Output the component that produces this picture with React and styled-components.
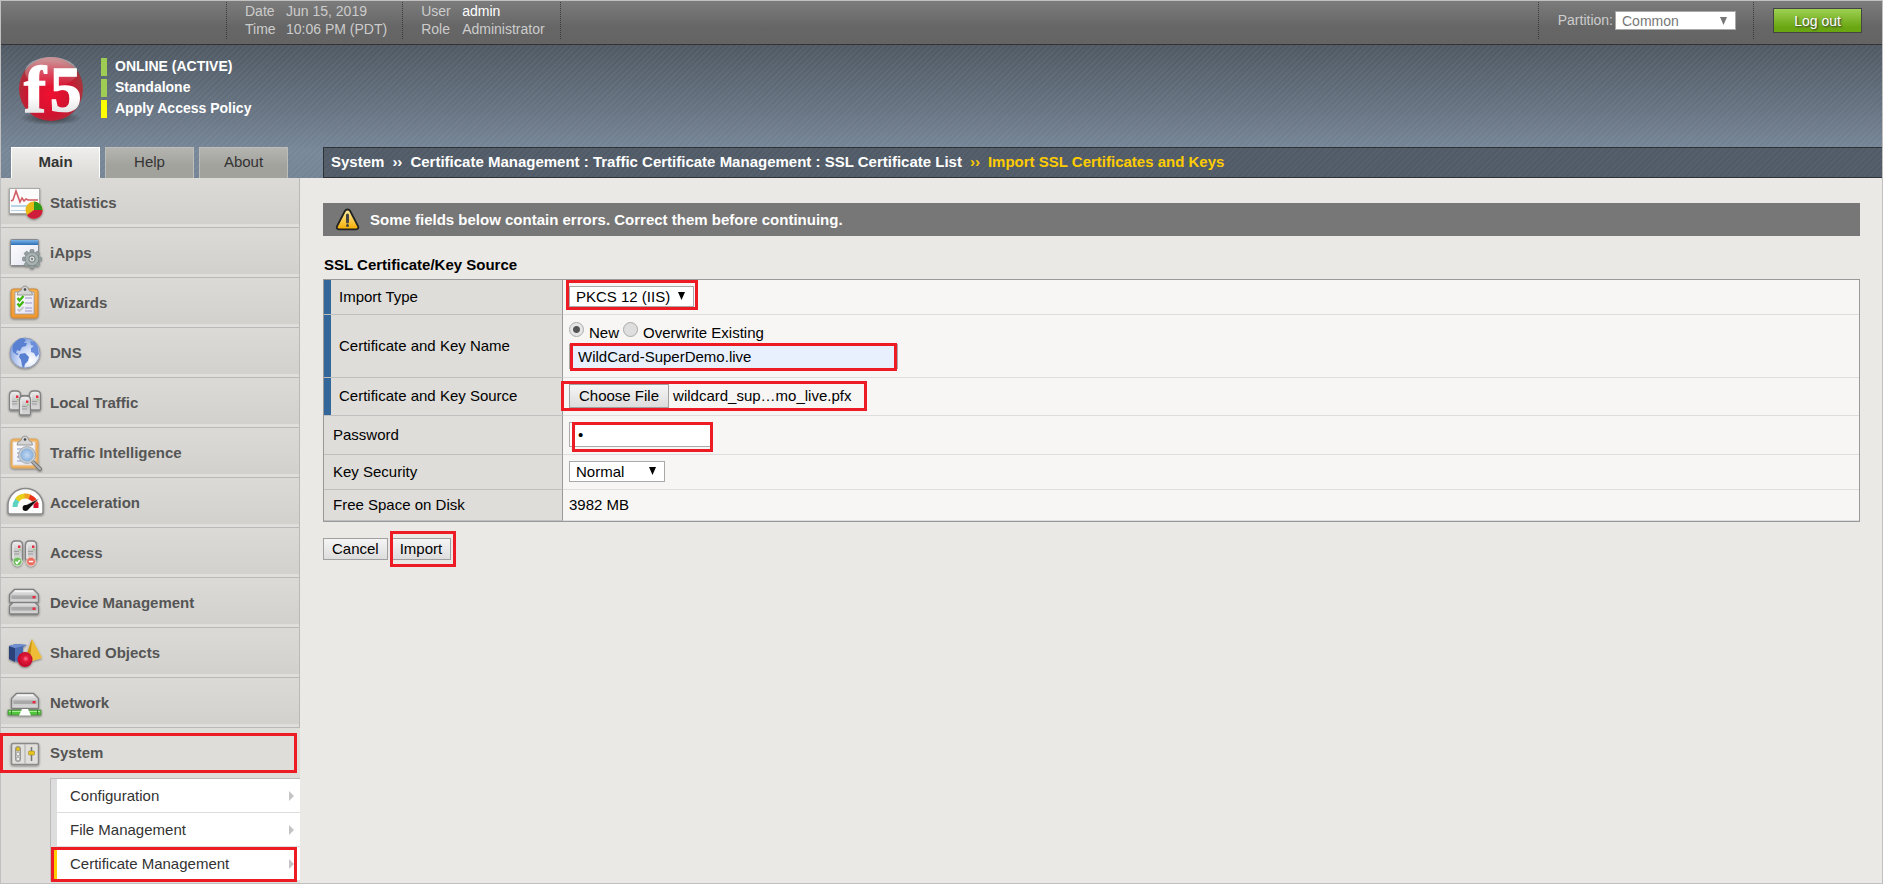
import React from 'react';
import styled, { createGlobalStyle } from 'styled-components';

const GlobalStyle = createGlobalStyle`
  *, *::before, *::after { box-sizing: border-box; }
  body {
    margin: 0;
    background: #eae9e5;
    color: #000;
    font-family: "Liberation Sans", Arial, sans-serif;
    font-size: 15px;
  }
  button, input, select { font-family: inherit; margin: 0; }
`;

const Page = styled.div`
  display: flex;
  flex-direction: column;
  min-height: 100vh;
  border: 1px solid #c0c0c0;
`;

const TopBar = styled.header`
  display: flex;
  height: 44px;
  padding-top: 1px;
  border-bottom: 1px solid #333;
  background: linear-gradient(#7c7c7c, #666 60%, #646464);
  color: #ccc;
  font-size: 14px;
  line-height: 18px;
`;

const DeviceSlot = styled.div`
  width: 225px;
`;

const Facts = styled.dl`
  display: grid;
  grid-template-columns: ${(p) => p.$label}px auto;
  align-content: start;
  height: 37px;
  margin: 0;
  padding: 0 15px 0 18px;
  border-left: 1px dotted #3a3a3a;
`;

const FactLabel = styled.dt``;

const FactValue = styled.dd`
  margin: 0;
  color: ${(p) => (p.$strong ? '#fff' : 'inherit')};
`;

const TopSpacer = styled.div`
  flex: 1;
  height: 37px;
  border-left: 1px dotted #3a3a3a;
`;

const TopGroup = styled.div`
  display: flex;
  align-items: flex-start;
  gap: 2px;
  height: 37px;
  padding: ${(p) => p.$top}px ${(p) => p.$right}px 0 19px;
  border-left: 1px dotted #3a3a3a;
`;

const PartitionLabel = styled.label``;

const SelectWrap = styled.span`
  position: relative;
  display: inline-flex;
`;

const SelectArrow = styled.svg`
  position: absolute;
  top: 50%;
  right: 9px;
  margin-top: -4px;
  pointer-events: none;
`;

const Select = styled.select`
  appearance: none;
  width: ${(p) => p.$width}px;
  height: ${(p) => p.$height || 21}px;
  padding: 0 6px;
  border: 1px solid #a9a9a9;
  border-radius: 0;
  background: #fff;
  color: ${(p) => p.$color || '#000'};
  font-size: ${(p) => p.$size || 15}px;
`;

const LogoutButton = styled.button`
  width: 89px;
  height: 25px;
  padding: 0;
  border: 1px solid #444;
  background: linear-gradient(#9ed052, #6aa612 80%);
  color: #fff;
  font-size: 14px;
  text-shadow: 1px 1px 2px #333;
`;

const Banner = styled.div`
  display: flex;
  flex-direction: column;
  justify-content: space-between;
  height: 133px;
  background:
    repeating-linear-gradient(135deg, rgba(255, 255, 255, 0.04) 0 2px, transparent 2px 4px),
    linear-gradient(#4f5963, #6a7786 55%, #778798 80%, #748495);
`;

const Brand = styled.div`
  display: flex;
  gap: 10px;
  padding: 10px 0 0 15px;
`;

const StatusList = styled.ul`
  display: flex;
  flex-direction: column;
  gap: 3px;
  margin: 0;
  padding: 3px 0 0;
  list-style: none;
`;

const Status = styled.li`
  height: 18px;
  padding-left: 8px;
  border-left: 6px solid ${(p) => p.$color};
  color: #fff;
  font-size: 14px;
  font-weight: bold;
  line-height: 17px;
`;

const NavBar = styled.div`
  display: flex;
  height: 31px;
`;

const Tabs = styled.nav`
  display: flex;
  flex: none;
  gap: 5px;
  width: 322px;
  padding-left: 10px;
`;

const Tab = styled.a`
  width: 89px;
  border: 1px solid ${(p) => (p.$active ? '#fff' : '#bcbcb8')};
  border-bottom: 0;
  background: ${(p) => (p.$active ? 'linear-gradient(#efeeec, #dbdad6)' : 'linear-gradient(#b4b4b0, #a2a29d 60%)')};
  color: #333;
  font-weight: ${(p) => (p.$active ? 'bold' : 'normal')};
  line-height: 28px;
  text-align: center;
  text-decoration: none;
`;

const Breadcrumb = styled.nav`
  display: flex;
  flex: 1;
  gap: 8px;
  padding-left: 7px;
  border: 1px solid #2f3338;
  border-right: 0;
  background:
    repeating-linear-gradient(135deg, rgba(255, 255, 255, 0.03) 0 2px, transparent 2px 4px),
    #505b67;
  color: #fff;
  font-weight: bold;
  line-height: 28px;
  white-space: pre;
`;

const Crumb = styled.span`
  color: ${(p) => (p.$current ? '#ffcc00' : 'inherit')};
`;

const Body = styled.div`
  display: flex;
  flex: 1;
`;

const Sidebar = styled.nav`
  flex: none;
  width: 299px;
  background: #deddd9;
`;

const NavItem = styled.a`
  display: flex;
  align-items: center;
  gap: 4px;
  height: 50px;
  padding-left: 4px;
  border-right: 1px solid #b9b9b9;
  border-bottom: 1px solid #b9b9b9;
  background: linear-gradient(#dbdad6, #d2d1cd 46px, #dfdeda 46px);
  color: #555;
  font-weight: bold;
  text-decoration: none;
`;

const NavLabel = styled.span`
  padding-bottom: 1px;
`;

const OpenItem = styled(NavItem)`
  position: relative;
  border: 0;
  background: none;
`;

const SubMenu = styled.ul`
  margin: 0 0 0 49px;
  padding: 0;
  border-top: 1px solid #bbb;
  border-left: 1px solid #bbb;
  list-style: none;
`;

const SubItem = styled.li`
  position: relative;
  border-bottom: 1px solid #ddd;
  border-left: 6px solid ${(p) => (p.$active ? '#ffcc00' : '#ddd')};
  background: #fff;
`;

const SubLink = styled.a`
  display: flex;
  align-items: center;
  justify-content: space-between;
  height: 33px;
  padding: 0 6px 0 13px;
  color: #333;
  text-decoration: none;
`;

/* Red call-out frame drawn over the control it wraps */
const Callout = styled.span`
  position: absolute;
  z-index: 1;
  inset: ${(p) => p.$inset};
  border: 3px solid #ed1c24;
  pointer-events: none;
`;

const Marked = styled.span`
  position: relative;
  display: inline-flex;
  align-items: center;
  vertical-align: top;
`;

const Main = styled.main`
  flex: 1;
  padding: 25px 22px 20px 23px;
`;

const Alert = styled.div`
  display: flex;
  align-items: center;
  gap: 10px;
  height: 33px;
  padding-left: 12px;
  background: #777;
  color: #fff;
  font-weight: bold;
`;

const Heading = styled.h1`
  margin: 19px 0 4px;
  padding-left: 1px;
  font-size: 15px;
  line-height: 20px;
`;

const FormTable = styled.table`
  width: 100%;
  border: 1px solid #999;
  border-spacing: 0;
`;

const Row = styled.tr`
  height: ${(p) => p.$height}px;
`;

const LabelCell = styled.th`
  width: 239px;
  padding: 0 0 2px ${(p) => (p.$required ? 15 : 9)}px;
  border-right: 1px solid #999;
  border-bottom: 1px solid #bfbfbf;
  background: ${(p) => (p.$required ? 'linear-gradient(90deg, #369 7px, #deddd9 7px)' : '#deddd9')};
  font-weight: normal;
  text-align: left;
`;

const ValueCell = styled.td`
  padding: 0 6px 2px;
  border-bottom: 1px solid #ddd;
  background: #f7f6f4;
`;

const RadioLine = styled.div`
  display: flex;
  gap: 4px;
  height: 22px;
`;

const Radio = styled.input`
  appearance: none;
  width: 15px;
  height: 15px;
  border: 1px solid #aaa;
  border-radius: 50%;
  background: ${(p) => (p.defaultChecked ? 'radial-gradient(circle, #555 3px, #e6e6e6 4px)' : '#dedede')};
`;

const RadioLabel = styled.label`
  padding: 2px 0 0 1px;
`;

const TextInput = styled.input`
  width: ${(p) => p.$width}px;
  height: 25px;
  padding: 0 8px;
  border: 1px solid #aaa;
  background: ${(p) => p.$bg || '#fff'};
  color: #000;
  font-size: 15px;
`;

const FormButton = styled.button`
  height: ${(p) => p.$height || 22}px;
  padding: 0 ${(p) => p.$pad || 8}px;
  border: 1px solid #a0a0a0;
  background: linear-gradient(#f5f5f5, #ddd);
  color: #000;
  font-size: 15px;
  line-height: 18px;
`;

const FileName = styled.span`
  padding-left: 4px;
`;

const Actions = styled.div`
  display: flex;
  gap: 3px;
  padding-top: 16px;
`;

const LogoArt = styled.svg`
  overflow: visible;
`;

function Logo() {
  return (
    <LogoArt width="75" height="76" viewBox="0 0 75 76" aria-label="f5" role="img">
      <defs>
        <radialGradient id="ball" cx="0.48" cy="0.58" r="0.62">
          <stop offset="0" stopColor="#f01030" />
          <stop offset="0.55" stopColor="#cf1430" />
          <stop offset="0.85" stopColor="#a8343c" />
          <stop offset="1" stopColor="#7d2b30" />
        </radialGradient>
        <linearGradient id="gloss" x1="0" y1="0" x2="0" y2="1">
          <stop offset="0" stopColor="#fff" stopOpacity="0.5" />
          <stop offset="1" stopColor="#fff" stopOpacity="0" />
        </linearGradient>
        <linearGradient id="ink" x1="0" y1="0" x2="0" y2="1">
          <stop offset="0" stopColor="#fff" />
          <stop offset="0.6" stopColor="#fff" />
          <stop offset="1" stopColor="#cfcfd2" />
        </linearGradient>
        <radialGradient id="ballshadow">
          <stop offset="0" stopColor="#222" stopOpacity="0.8" />
          <stop offset="1" stopColor="#222" stopOpacity="0" />
        </radialGradient>
      </defs>
      <ellipse cx="35" cy="63" rx="31" ry="7" fill="url(#ballshadow)" />
      <circle cx="35" cy="34" r="32" fill="url(#ball)" />
      <ellipse cx="35" cy="17" rx="26" ry="15" fill="url(#gloss)" />
      <g fill="url(#ink)" stroke="url(#ink)" strokeWidth="1.6" fontFamily="Liberation Serif, serif" fontWeight="bold">
        <text x="8" y="57" fontSize="66">f</text>
        <text x="34" y="56" fontSize="63">5</text>
      </g>
    </LogoArt>
  );
}

function IconDefs() {
  return (
    <svg width="0" height="0" style={{ position: 'absolute' }} aria-hidden="true">
      <defs>
        <linearGradient id="metal" x1="0" y1="0" x2="0" y2="1">
          <stop offset="0" stopColor="#f2f2f2" />
          <stop offset="0.5" stopColor="#c6c6c6" />
          <stop offset="1" stopColor="#d8d8d8" />
        </linearGradient>
        <linearGradient id="paper" x1="0" y1="0" x2="1" y2="1">
          <stop offset="0" stopColor="#fff" />
          <stop offset="1" stopColor="#e2e2f0" />
        </linearGradient>
        <linearGradient id="board" x1="0" y1="0" x2="0" y2="1">
          <stop offset="0" stopColor="#f6b04e" />
          <stop offset="1" stopColor="#f0982f" />
        </linearGradient>
        <linearGradient id="blueBand" x1="0" y1="0" x2="0" y2="1">
          <stop offset="0" stopColor="#7ab3e6" />
          <stop offset="1" stopColor="#2e6eb5" />
        </linearGradient>
        <radialGradient id="sea" cx="0.7" cy="0.75" r="0.8">
          <stop offset="0" stopColor="#fff" />
          <stop offset="0.5" stopColor="#cfdcf7" />
          <stop offset="1" stopColor="#7f9fe0" />
        </radialGradient>
        <radialGradient id="lens">
          <stop offset="0" stopColor="#c3daf3" />
          <stop offset="1" stopColor="#7ea9d8" />
        </radialGradient>
        <radialGradient id="redBall" cx="0.55" cy="0.45">
          <stop offset="0" stopColor="#ff7a92" />
          <stop offset="0.4" stopColor="#e01638" />
          <stop offset="1" stopColor="#c20d2c" />
        </radialGradient>
        <linearGradient id="warn" x1="0" y1="0" x2="0" y2="1">
          <stop offset="0" stopColor="#fff0a0" />
          <stop offset="1" stopColor="#f5ac00" />
        </linearGradient>
        <filter id="soft" x="-20%" y="-20%" width="140%" height="150%">
          <feDropShadow dx="0" dy="1" stdDeviation="1" floodColor="#000" floodOpacity="0.45" />
        </filter>
      </defs>
    </svg>
  );
}

function Icon({ children }) {
  return (
    <svg width="41" height="40" viewBox="0 0 41 40" aria-hidden="true">
      <g filter="url(#soft)">{children}</g>
    </svg>
  );
}

function Tower({ x, y, h = 19 }) {
  return (
    <g>
      <path
        d={`M${x + 0.5} ${y + 4} q0 -4 4 -4 h3 q4 0 4 4 v${h - 5} q0 1 -1 1 h-9 q-1 0 -1 -1 z`}
        fill="url(#metal)"
        stroke="#828282"
        strokeWidth="1.3"
      />
      <path d={`M${x + 2} ${y + 4}v${h - 6}`} stroke="#f4f4f4" />
      <rect x={x + 7} y={y + 4.5} width="2.4" height="2.4" fill="#e8253b" />
      <rect x={x + 8} y={y + 8} width="1.6" height="1.4" fill="#8fce72" />
      <path d={`M${x + 3} ${y + 10.5}h5M${x + 3} ${y + 13}h5`} stroke="#9d9d9d" />
    </g>
  );
}

function Drive({ x, y, w = 29, h = 14 }) {
  return (
    <g>
      <path
        d={`M${x + 5} ${y} h${w - 10} l5 5 v${h - 6} q0 1 -1 1 h${2 - w} q-1 0 -1 -1 v${6 - h} z`}
        fill="url(#metal)"
        stroke="#7e7e7e"
        strokeWidth="1.3"
      />
      <rect x={x + 2} y={y + h / 2 - 0.5} width={w - 4} height="3.5" fill="#a9a9a9" />
      <path d={`M${x + 5.5} ${y + 1.5}h${w - 11}`} stroke="#fff" />
      <rect x={x + w - 6} y={y + h / 2} width="3" height="2.4" fill="#ea2b40" />
    </g>
  );
}

function Clipboard({ pale }) {
  return (
    <g>
      <rect x="6" y="6" width="27" height="29" rx="2.5" fill={pale ? '#f3b45f' : 'url(#board)'} stroke={pale ? '#d9a45c' : '#c98333'} />
      <rect
        x={pale ? 8 : 10}
        y="9"
        width={pale ? 22 : 19}
        height={pale ? 23 : 22}
        fill="url(#paper)"
        stroke={pale ? '#dcdce4' : '#9a9aa8'}
        strokeWidth="0.8"
      />
      <path
        d="M12 12 q0 -4 4 -4.500 q1 -4.500 4 -4.500 q3 0 4 4.500 q3.500 0.500 3.500 4.500 z"
        fill="#d4d4d4"
        stroke="#999"
      />
      <circle cx="20" cy="6.500" r="1.300" fill="#444" />
    </g>
  );
}

const icons = {
  statistics: (
    <Icon>
      <rect x="4.5" y="5.500" width="30" height="25" fill="#fbfbfb" stroke="#aaa" />
      <path d="M6 22h27v2H6zM6 27h18v1H6z" fill="#b9d3e6" />
      <path d="M6 18l2-1 3-9 4 11 2-4 2 3 2-2 2 1h10" fill="none" stroke="#d45b66" strokeWidth="1.600" />
      <circle cx="29" cy="27" r="8.500" fill="#e7b912" />
      <path d="M29 27V18.500A8.500 8.500 0 0 1 37.500 27.500z" fill="#2f9a1c" />
      <path d="M29 27L37.500 27A8.500 8.500 0 0 1 22 32z" fill="#cf1b3a" />
    </Icon>
  ),
  iapps: (
    <Icon>
      <rect x="5.500" y="6.500" width="28" height="26" rx="1" fill="url(#paper)" stroke="#868a90" />
      <rect x="6" y="7" width="27" height="5" fill="url(#blueBand)" />
      <g transform="translate(27 26)">
        {[0, 45, 90, 135, 180, 225, 270, 315].map((a) => (
          <rect key={a} x="-2" y="-9.500" width="4" height="5" rx="1" fill="#95a0a0" stroke="#77807f" strokeWidth="0.6" transform={`rotate(${a})`} />
        ))}
        <circle r="6.800" fill="#a7b1b1" stroke="#7e8786" strokeWidth="0.800" />
        <circle r="3.200" fill="#d9dddd" stroke="#6f7877" />
        <circle r="1.200" fill="#7f8887" />
      </g>
    </Icon>
  ),
  wizards: (
    <Icon>
      <Clipboard />
      <path d="M20 15h7M20 20h7M20 25h7M20 28h7" stroke="#b5b5d6" strokeWidth="1.500" />
      <path d="M12.500 15l2 2.500 4-4.500M12.500 20.500l2 2.500 4-4.500" fill="none" stroke="#41b711" strokeWidth="2.400" />
      <path d="M12.500 26l2 2 4-4" fill="none" stroke="#c4c4cc" strokeWidth="1.800" />
    </Icon>
  ),
  dns: (
    <Icon>
      <circle cx="20" cy="20" r="15" fill="url(#sea)" stroke="#8d99b5" />
      <path d="M8 12 q4 -6 10 -7 l3 2 -2 3 3 0 -1 3 -4 1 -2 4 -3 -1 -1 3 3 1 -2 1 -4 -3 q-1 -3 0 -7z" fill="#5a80d2" />
      <path d="M15 21 l5 -1 4 4 -1 4 -3 3 -1 4 -2 -2 -1 -6 -2 -3z" fill="#5a80d2" />
      <path d="M25 8 l5 1 3 5 1 7 -3 3 -2 -4 -3 -1 0 -4 3 -2 -3 -1z" fill="#6a8edb" />
    </Icon>
  ),
  localTraffic: (
    <Icon>
      <path d="M15 13h11" stroke="#888" strokeWidth="2" />
      <Tower x={4} y={8} />
      <Tower x={24} y={8} />
      <Tower x={14} y={13} />
    </Icon>
  ),
  trafficIntelligence: (
    <Icon>
      <Clipboard pale />
      <path d="M12 16h5M12 20h3M12 24h3M12 28h5" stroke="#a9b8d8" strokeWidth="1.500" />
      <path d="M28 29l7 7" stroke="#777" strokeWidth="4" strokeLinecap="round" />
      <path d="M28 29l7 7" stroke="#b0b0b0" strokeWidth="2" strokeLinecap="round" />
      <circle cx="22" cy="22" r="7.500" fill="url(#lens)" stroke="#c7ccd2" strokeWidth="2" />
      <circle cx="22" cy="22" r="8.500" fill="none" stroke="#8d949c" strokeWidth="0.600" />
    </Icon>
  ),
  acceleration: (
    <Icon>
      <path d="M3 29V22A17.500 16.500 0 0 1 38 22V29q0 2-2 2H5q-2 0-2-2z" fill="#fdfdfd" stroke="#8a8a8a" strokeWidth="1.500" />
      <path d="M10 24A11 11 0 0 1 12.500 17" fill="none" stroke="#5fd3c2" strokeWidth="5" />
      <path d="M12 17A11 11 0 0 1 20 13" fill="none" stroke="#e8cf1d" strokeWidth="5" />
      <path d="M19.500 13A11 11 0 0 1 25 14" fill="none" stroke="#f0a020" strokeWidth="5" />
      <path d="M24.500 14A11 11 0 0 1 31 21" fill="none" stroke="#e8301c" strokeWidth="5" />
      <path d="M31 20v5" stroke="#d8102c" strokeWidth="5" />
      <path d="M19 23L34 15.500 23 27z" fill="#111" stroke="#fff" strokeWidth="0.500" />
      <circle cx="20.500" cy="25" r="2.900" fill="#111" />
    </Icon>
  ),
  access: (
    <Icon>
      <Tower x={6} y={8} />
      <Tower x={20} y={8} />
      <circle cx="12.500" cy="28.500" r="4.400" fill="#6cbf5c" stroke="#cfe6ca" />
      <path d="M10.500 28.500l1.500 2 2.800-3.500" fill="none" stroke="#fff" strokeWidth="1.400" />
      <circle cx="26" cy="28.500" r="4.400" fill="#ea6a5c" stroke="#f3cbc6" />
      <path d="M23.800 28.500h4.400" stroke="#fff" strokeWidth="1.500" />
    </Icon>
  ),
  device: (
    <Icon>
      <Drive x={4.5} y={18} h={13} />
      <Drive x={4.5} y={6.5} h={13} />
    </Icon>
  ),
  shared: (
    <Icon>
      <path d="M4 13l7-2 11 1-4 2v14l-5 1-9-3z" fill="#4a6cb3" />
      <path d="M4 13l6 2v14l-6-3z" fill="#2c4379" />
      <path d="M4 13l7-2 11 1-12 3z" fill="#6f8fd0" />
      <path d="M27 6l10 19-10 3-6-5z" fill="#eebd35" />
      <path d="M27 6l-6 18 4 3z" fill="#c98f12" />
      <circle cx="20" cy="26.500" r="7.500" fill="url(#redBall)" />
    </Icon>
  ),
  network: (
    <Icon>
      <Drive x={6.5} y={10.5} w={27} h={15} />
      <rect x="3" y="27" width="33" height="5" fill="#4fc63a" stroke="#56864c" strokeWidth="0.800" />
      <path d="M4 28.500h31" stroke="#a4ef8f" />
      <path d="M6.500 27v5M32.500 27v5" stroke="#3b7c30" />
      <path d="M17 26h6l3 6.500H14z" fill="#fff" />
    </Icon>
  ),
  system: (
    <Icon>
      <rect x="6.500" y="10.500" width="27" height="21" rx="1.500" fill="#e0dfdb" stroke="#8a8a8a" strokeWidth="1.500" />
      <path d="M20 11v20" stroke="#aaa" />
      <rect x="10.500" y="13.500" width="5" height="15" rx="2" fill="#c9c9c5" stroke="#888" strokeWidth="0.800" />
      <circle cx="13" cy="16" r="2" fill="#e8c51c" stroke="#857738" strokeWidth="0.500" />
      <circle cx="13" cy="21" r="1.800" fill="#efefef" stroke="#888" strokeWidth="0.600" />
      <circle cx="13" cy="26" r="1.800" fill="#efefef" stroke="#888" strokeWidth="0.600" />
      <path d="M26.500 14v14" stroke="#777" strokeWidth="1.500" />
      <rect x="23.500" y="18" width="6" height="4" rx="1" fill="#e8c51c" stroke="#948538" strokeWidth="0.600" />
    </Icon>
  ),
};

const navItems = [
  ['Statistics', 'statistics'],
  ['iApps', 'iapps'],
  ['Wizards', 'wizards'],
  ['DNS', 'dns'],
  ['Local Traffic', 'localTraffic'],
  ['Traffic Intelligence', 'trafficIntelligence'],
  ['Acceleration', 'acceleration'],
  ['Access', 'access'],
  ['Device Management', 'device'],
  ['Shared Objects', 'shared'],
  ['Network', 'network'],
];

const subItems = [
  { label: 'Configuration' },
  { label: 'File Management' },
  { label: 'Certificate Management', active: true },
];

function Dropdown({ options, arrow, ...rest }) {
  return (
    <SelectWrap>
      <Select {...rest}>
        {options.map((o) => (
          <option key={o}>{o}</option>
        ))}
      </Select>
      <SelectArrow width="7" height="8" viewBox="0 0 7 8" aria-hidden="true">
        <path d="M0 0h7L3.500 8z" fill={arrow || '#000'} />
      </SelectArrow>
    </SelectWrap>
  );
}

function ImportForm() {
  return (
    <form onSubmit={(e) => e.preventDefault()}>
      <FormTable>
        <tbody>
          <Row $height={35}>
            <LabelCell scope="row" $required>
              <label htmlFor="importType">Import Type</label>
            </LabelCell>
            <ValueCell>
              <Marked>
                <Dropdown id="importType" $width={125} options={['PKCS 12 (IIS)']} />
                <Callout $inset="-6px -4px -3px -3px" />
              </Marked>
            </ValueCell>
          </Row>
          <Row $height={63}>
            <LabelCell scope="row" $required>
              <label htmlFor="certName">Certificate and Key Name</label>
            </LabelCell>
            <ValueCell>
              <RadioLine>
                <Radio type="radio" name="mode" id="modeNew" defaultChecked />
                <RadioLabel htmlFor="modeNew">New</RadioLabel>
                <Radio type="radio" name="mode" id="modeOver" />
                <RadioLabel htmlFor="modeOver">Overwrite Existing</RadioLabel>
              </RadioLine>
              <Marked>
                <TextInput id="certName" $width={329} $bg="#e8f0fe" defaultValue="WildCard-SuperDemo.live" />
                <Callout $inset="-1px 1px -2px 1px" />
              </Marked>
            </ValueCell>
          </Row>
          <Row $height={38}>
            <LabelCell scope="row" $required>
              <label htmlFor="chooseFile">Certificate and Key Source</label>
            </LabelCell>
            <ValueCell>
              <Marked>
                <FormButton id="chooseFile" type="button" $height={24} $pad={9}>Choose File</FormButton>
                <FileName>wildcard_sup…mo_live.pfx</FileName>
                <Callout $inset="-3px -16px -3px -8px" />
              </Marked>
            </ValueCell>
          </Row>
          <Row $height={39}>
            <LabelCell scope="row">
              <label htmlFor="password">Password</label>
            </LabelCell>
            <ValueCell>
              <Marked>
                <TextInput id="password" type="password" $width={142} defaultValue="x" />
                <Callout $inset="0 -2px -5px 3px" />
              </Marked>
            </ValueCell>
          </Row>
          <Row $height={35}>
            <LabelCell scope="row">
              <label htmlFor="keySecurity">Key Security</label>
            </LabelCell>
            <ValueCell>
              <Marked>
                <Dropdown id="keySecurity" $width={96} options={['Normal']} />
              </Marked>
            </ValueCell>
          </Row>
          <Row $height={31}>
            <LabelCell scope="row">Free Space on Disk</LabelCell>
            <ValueCell>3982 MB</ValueCell>
          </Row>
        </tbody>
      </FormTable>
      <Actions>
        <FormButton type="button">Cancel</FormButton>
        <Marked>
          <FormButton type="submit">Import</FormButton>
          <Callout $inset="-7px -5px -7px -1px" />
        </Marked>
      </Actions>
    </form>
  );
}

export default function App() {
  return (
    <Page>
      <GlobalStyle />
      <IconDefs />
      <TopBar>
        <DeviceSlot />
        <Facts $label={41}>
          <FactLabel>Date</FactLabel>
          <FactValue>Jun 15, 2019</FactValue>
          <FactLabel>Time</FactLabel>
          <FactValue>10:06 PM (PDT)</FactValue>
        </Facts>
        <Facts $label={41}>
          <FactLabel>User</FactLabel>
          <FactValue $strong>admin</FactValue>
          <FactLabel>Role</FactLabel>
          <FactValue>Administrator</FactValue>
        </Facts>
        <TopSpacer />
        <TopGroup $top={9} $right={17}>
          <PartitionLabel htmlFor="partition">Partition:</PartitionLabel>
          <Dropdown id="partition" $width={121} $height={19} $size={14} $color="#777" arrow="#777" options={['Common']} />
        </TopGroup>
        <TopGroup $top={6} $right={20}>
          <LogoutButton type="button">Log out</LogoutButton>
        </TopGroup>
      </TopBar>
      <Banner>
        <Brand>
          <Logo />
          <StatusList>
            <Status $color="#9fcd53">ONLINE (ACTIVE)</Status>
            <Status $color="#9fcd53">Standalone</Status>
            <Status $color="#ffff00">Apply Access Policy</Status>
          </StatusList>
        </Brand>
        <NavBar>
          <Tabs>
            <Tab href="#main" $active>Main</Tab>
            <Tab href="#help">Help</Tab>
            <Tab href="#about">About</Tab>
          </Tabs>
          <Breadcrumb>
            <Crumb>System</Crumb>
            <Crumb>››</Crumb>
            <Crumb>Certificate Management : Traffic Certificate Management : SSL Certificate List</Crumb>
            <Crumb $current>››</Crumb>
            <Crumb $current>Import SSL Certificates and Keys</Crumb>
          </Breadcrumb>
        </NavBar>
      </Banner>
      <Body>
        <Sidebar>
          {navItems.map(([label, icon]) => (
            <NavItem key={icon} href={`#${icon}`}>
              {icons[icon]}
              <NavLabel>{label}</NavLabel>
            </NavItem>
          ))}
          <OpenItem href="#system">
            {icons.system}
            <NavLabel>System</NavLabel>
            <Callout $inset="5px 3px 5px -1px" />
          </OpenItem>
          <SubMenu>
            {subItems.map((item) => (
              <SubItem key={item.label} $active={item.active}>
                <SubLink href="#sub">
                  {item.label}
                  <svg width="5" height="10" viewBox="0 0 5 10" aria-hidden="true">
                    <path d="M0 0l5 5-5 5z" fill="#c4c4c4" />
                  </svg>
                </SubLink>
                {item.active && <Callout $inset="0 3px -2px -6px" />}
              </SubItem>
            ))}
          </SubMenu>
        </Sidebar>
        <Main>
          <Alert role="alert">
            <svg width="25" height="23" viewBox="0 0 25 23" aria-hidden="true">
              <path d="M12.500 1.500q1.800 0 2.800 1.800l7.800 15q1 3-2 3H4q-3 0-2-3l7.800-15q1-1.800 2.700-1.800z" fill="url(#warn)" stroke="#222" strokeWidth="1.800" />
              <path d="M12.500 7v7" stroke="#444" strokeWidth="3" strokeLinecap="round" />
              <circle cx="12.500" cy="17.500" r="1.500" fill="#444" />
            </svg>
            Some fields below contain errors. Correct them before continuing.
          </Alert>
          <Heading>SSL Certificate/Key Source</Heading>
          <ImportForm />
        </Main>
      </Body>
    </Page>
  );
}
